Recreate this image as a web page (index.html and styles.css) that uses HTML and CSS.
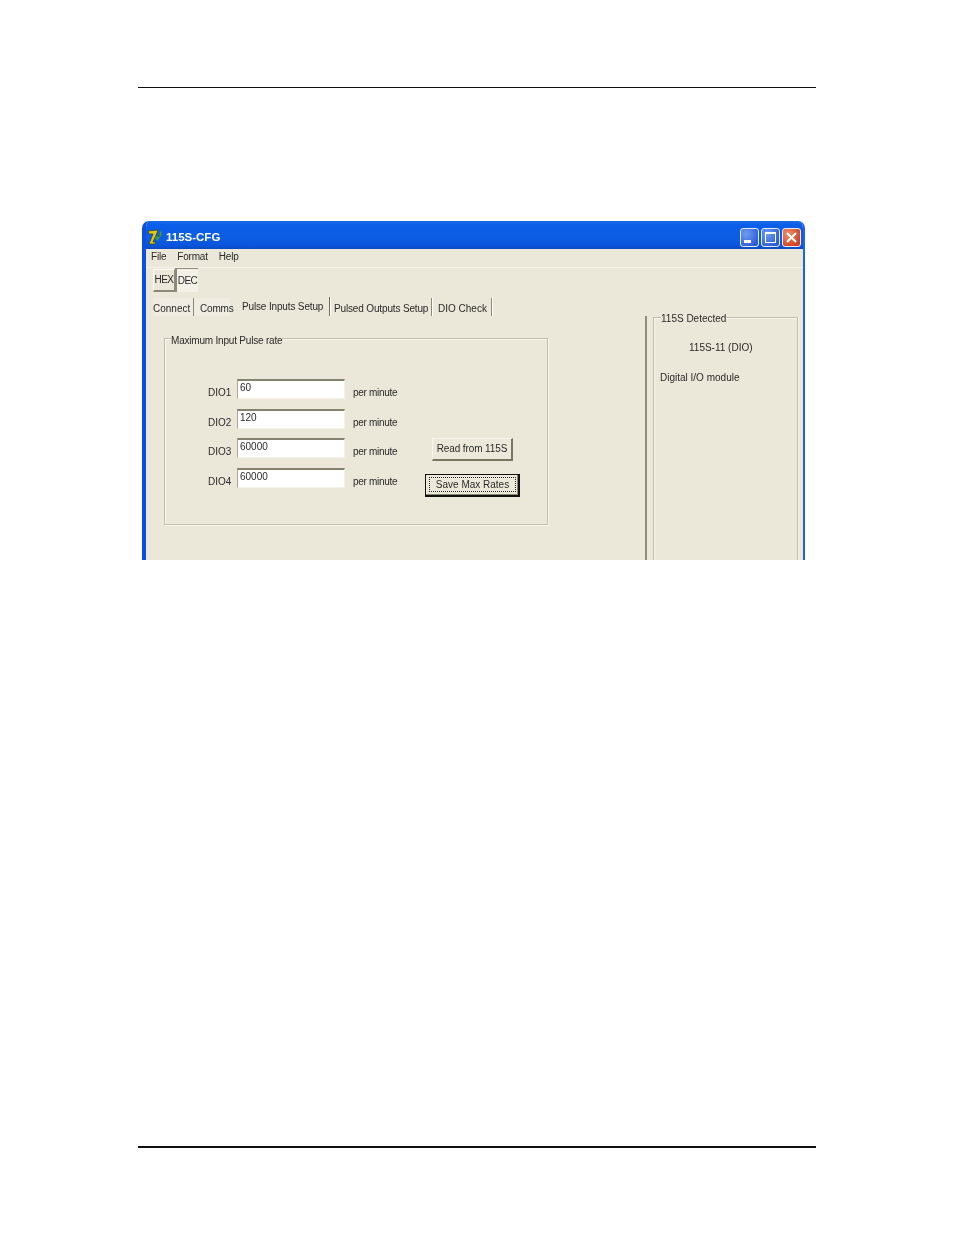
FILE: index.html
```html
<!DOCTYPE html>
<html lang="en">
<head>
<meta charset="utf-8">
<title>115S-CFG</title>
<link rel="stylesheet" href="styles.css">
</head>
<body>
<div class="page">
  <div class="rule"></div>
  <div class="window">
    <div class="titlebar">
      <svg class="app-icon" viewBox="0 0 16 16" width="16" height="16">
        <path d="M1 2 L11 1 L10 4 L6 13 L9 13 L8 15 L2 15 L6 5 L2 5 Z" fill="#d8c820" stroke="#3a3a10" stroke-width=".7"/>
        <path d="M8 9 L15 1 L14 7 L10 12 Z" fill="#3f9a45"/>
        <path d="M10 7 L13 4 L12 8 Z" fill="#20506a"/>
      </svg>
      <span class="title">115S-CFG</span>
      <div class="controls">
        <div class="ctl ctl-blue">
          <svg viewBox="0 0 19 19" width="19" height="19"><rect x="4" y="12" width="7" height="3" fill="#fff"/></svg>
        </div>
        <div class="ctl ctl-blue">
          <svg viewBox="0 0 19 19" width="19" height="19"><rect x="4.5" y="4.5" width="10" height="10" fill="none" stroke="#fff"/><rect x="4" y="4" width="11" height="2" fill="#fff"/></svg>
        </div>
        <div class="ctl ctl-red">
          <svg viewBox="0 0 19 19" width="19" height="19"><path d="M5 5 L14 14 M14 5 L5 14" stroke="#fff" stroke-width="2"/></svg>
        </div>
      </div>
    </div>
    <div class="menubar">
      <span class="menu-item">File</span>
      <span class="menu-item">Format</span>
      <span class="menu-item">Help</span>
    </div>
    <div class="toolbar">
      <div class="tool raised">HEX</div>
      <div class="tool pressed">DEC</div>
    </div>
    <div class="content">
      <div class="left">
        <div class="tabs">
          <span class="tab tab-connect">Connect</span>
          <span class="tab tab-comms">Comms</span>
          <span class="tab tab-active">Pulse Inputs Setup</span>
          <span class="tab tab-pulsed">Pulsed Outputs Setup</span>
          <span class="tab tab-dio">DIO Check</span>
        </div>
        <div class="tabpage">
          <div class="group group-rate">
            <div class="legend">Maximum Input Pulse rate</div>
            <div class="rate-grid">
              <span class="dio">DIO1</span>
              <div class="field">60</div>
              <span class="unit">per minute</span>
              <span></span>
              <span class="dio">DIO2</span>
              <div class="field">120</div>
              <span class="unit">per minute</span>
              <span></span>
              <span class="dio">DIO3</span>
              <div class="field">60000</div>
              <span class="unit">per minute</span>
              <button class="btn btn-read" type="button">Read from 115S</button>
              <span class="dio">DIO4</span>
              <div class="field">60000</div>
              <span class="unit">per minute</span>
              <button class="btn btn-save" type="button"><span class="focus">Save Max Rates</span></button>
            </div>
          </div>
        </div>
      </div>
      <div class="group group-detected">
        <div class="legend">115S Detected</div>
        <div class="model">115S-11 (DIO)</div>
        <div class="desc">Digital I/O module</div>
      </div>
    </div>
  </div>
  <div class="rule rule-bottom"></div>
</div>
</body>
</html>
```
FILE: styles.css
```css
* { box-sizing: border-box; }
html, body { margin: 0; padding: 0; background: #fff; }
body { font-family: "Liberation Sans", Arial, sans-serif; }
.page { width: 954px; height: 1235px; padding: 87px 138px 0; overflow: hidden; }
.rule { height: 1px; width: 678px; background: #111; }
.rule-bottom { margin-top: 586px; height: 2px; }
.window {
  width: 663px; height: 339px; margin: 133px 0 0 4px;
  border-radius: 7px 7px 0 0; overflow: hidden;
  background: #ebe8d9; color: #2a2a2a;
  font-size: 10px; line-height: 12px;
  border-left: 4px solid #0f4fe0; border-right: 2px solid #1f62e6;
  filter: blur(.3px);
}
.titlebar {
  height: 28px; margin: 0 -2px 0 -4px; padding: 0 4px 0 5px;
  display: flex; align-items: center;
  background: linear-gradient(#1a6ae8 0, #0a5ee8 4px, #0d5de2 60%, #0a55dc 88%, #0a48c0 100%);
}
.app-icon { flex: none; margin-top: 3px; }
.title { margin: 3px 0 0 3px; color: #fff; font-size: 11.5px; font-weight: bold; }
.controls { margin-left: auto; display: flex; gap: 2px; margin-top: 4px; }
.ctl { width: 19px; height: 19px; border: 1px solid #e4ebfa; border-radius: 3px; overflow: hidden; }
.ctl svg { display: block; margin: -1px; }
.ctl-blue { background: radial-gradient(circle at 30% 30%, #6f9df0, #2b5cd8 80%); }
.ctl-red { background: radial-gradient(circle at 30% 30%, #ee9070, #d0401c 80%); }
.menubar {
  height: 19px; padding: 2px 0 0 5px; display: flex; gap: 11px; letter-spacing: -.2px;
  border-bottom: 1px solid #f6f4ea;
}
.toolbar { height: 24px; padding-left: 7px; display: flex; letter-spacing: -.5px; }
.tool { display: flex; align-items: center; justify-content: center; }
.raised {
  width: 22px; height: 23px; margin-top: 1px; border: 1px solid #fbfaf3;
  border-right-color: #8b8a78; border-bottom: 2px solid #8b8a78;
}
.pressed {
  width: 23px; height: 24px; background: #f4f2e8;
  border: 1px solid #8b8a78; border-width: 1px 0 0 2px;
}
.content { display: flex; align-items: flex-start; }
.left { width: 501px; flex: none; }
.tabs { height: 24px; display: flex; align-items: flex-end; padding: 6px 0 0 7px; white-space: nowrap; }
.tab { height: 18px; padding-top: 5px; border-right: 1px solid #8b8a78; box-shadow: 1px 0 0 #fff; background: #efede2; }
.tab-connect { width: 41px; }
.tab-comms { width: 36px; padding-left: 6px; border: 0; box-shadow: none; letter-spacing: -.2px; }
.tab-active { width: 100px; padding: 4px 0 0 12px; border-right: 1.5px solid #6f6e5c; height: 19px; background: none; letter-spacing: -.15px; }
.tab-pulsed { width: 102px; padding-left: 4px; background: none; letter-spacing: -.15px; }
.tab-dio { width: 60px; padding-left: 6px; background: none; }
.tabpage {
  height: 245px; padding: 22px 0 0 18px;
  border-right: 2px solid #8f8d7c;
}
.group {
  border: 1px solid #c2bfa9; box-shadow: 1px 1px 0 #f8f6ee, inset 1px 1px 0 #f8f6ee;
}
.legend {
  width: fit-content; margin: -4px 0 0 6px; background: #ebe8d9; white-space: nowrap;
}
.group-rate { width: 384px; height: 187px; }
.group-rate .legend { letter-spacing: -.2px; }
.rate-grid {
  display: grid; grid-template-columns: 29px 108px 80px 1fr;
  grid-auto-rows: 29.5px; align-items: start;
  padding: 32px 0 0 43px;
}
.dio { padding-top: 8px; }
.unit { padding: 8px 0 0 8px; letter-spacing: -.3px; }
.field {
  height: 20px; padding: 1px 0 0 2px; background: #fff;
  border-top: 2px solid #85836f; border-left: 1px solid #aaa894;
  border-bottom: 1px solid #f4f2e8; border-right: 1px solid #f4f2e8;
}
.btn {
  display: block; padding: 0; font: inherit; color: inherit; background: #ece9db;
  border: 1px solid #f8f6ee; border-right: 2px solid #77765f; border-bottom: 2px solid #77765f;
}
.btn-read { width: 81px; height: 23px; margin-left: 7px; letter-spacing: -.1px; }
.btn-save {
  width: 95px; height: 23px; margin-top: 6px; padding: 2px 2px 2px 3px;
  border: 1px solid #111; border-right-width: 2px; border-bottom-width: 2px;
  box-shadow: inset -1px -1px 0 #8b8a78;
}
.focus {
  display: block; height: 15px; line-height: 13px;
  border: 1px dotted #222;
}
.group-detected { width: 145px; height: 300px; margin: 25px 0 0 6px; }
.group-detected .legend { margin: -5px 0 0 7px; }
.model { margin: 17px 0 0 35px; }
.desc { margin: 18px 0 0 6px; }
```
